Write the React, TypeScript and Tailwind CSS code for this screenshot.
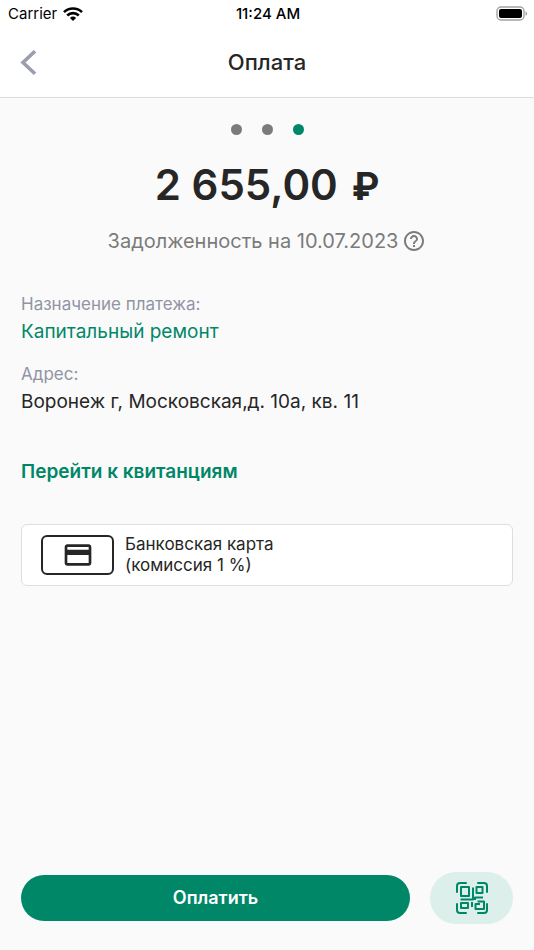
import type { ReactNode } from "react";

const STEPS = 3;
const CURRENT_STEP = 2;

function WifiIcon() {
  return (
    <svg aria-hidden width="20" height="14" viewBox="0 0 20 14" fill="none" stroke="#000" strokeWidth="2.6">
      <path d="M1 5.2a12.8 12.8 0 0 1 18 0" />
      <path d="M4.2 8.5a8.2 8.2 0 0 1 11.6 0" />
      <path d="M10 14 6.9 10.9a4.4 4.4 0 0 1 6.2 0Z" fill="#000" stroke="none" />
    </svg>
  );
}

function BatteryIcon() {
  return (
    <svg aria-hidden width="32" height="16" viewBox="0 0 32 16">
      <rect x="1" y="1" width="27" height="13" rx="4" fill="none" stroke="#a3a3a3" strokeWidth="1.4" />
      <rect x="3" y="3" width="23" height="9" rx="2" fill="#000" />
      <path d="M29.6 5.2c1.8.8 1.8 3.8 0 4.6Z" fill="#8c8c8c" />
    </svg>
  );
}

function HelpIcon() {
  return (
    <svg aria-hidden width="24" height="24" viewBox="0 0 24 24" fill="currentColor">
      <path d="M11 18h2v-2h-2v2zm1-16C6.48 2 2 6.48 2 12s4.48 10 10 10 10-4.48 10-10S17.52 2 12 2zm0 18c-4.41 0-8-3.59-8-8s3.59-8 8-8 8 3.59 8 8-3.59 8-8 8zm0-14c-2.21 0-4 1.79-4 4h2c0-1.1.9-2 2-2s2 .9 2 2c0 2-3 1.75-3 5h2c0-2.25 3-2.5 3-5 0-2.21-1.79-4-4-4z" />
    </svg>
  );
}

function CardIcon() {
  return (
    <svg aria-hidden width="32" height="32" viewBox="0 0 24 24" fill="currentColor">
      <path d="M20 4H4c-1.11 0-1.99.89-1.99 2L2 18c0 1.11.89 2 2 2h16c1.11 0 2-.89 2-2V6c0-1.11-.89-2-2-2zm0 14H4v-6h16v6zm0-10H4V6h16v2z" />
    </svg>
  );
}

function QrIcon() {
  return (
    <svg aria-hidden width="32" height="32" viewBox="0 0 32 32" fill="none" stroke="currentColor" strokeWidth="2" strokeLinejoin="round">
      <path strokeLinecap="round" d="M1 10V4a3 3 0 0 1 3-3h6M22 1h6a3 3 0 0 1 3 3v6M31 22v6a3 3 0 0 1-3 3h-6M10 31H4a3 3 0 0 1-3-3v-6" />
      <rect x="5" y="5" width="8" height="9" />
      <rect x="20.5" y="5" width="6" height="6" />
      <rect x="5" y="21" width="7" height="5" />
      <path d="M17 5.500v12H4.500M16 20v5M27 15.500h-8v2.500M21.500 19.500H28V27h-8.500v-5H24" />
    </svg>
  );
}

function Field({ label, children }: { label: string; children: ReactNode }) {
  return (
    <div>
      <dt className="text-[17px] leading-6 text-[#9194a3]">{label}</dt>
      <dd className="mt-0.5 text-[19px] leading-7">{children}</dd>
    </div>
  );
}

export default function App() {
  return (
    <div className="flex min-h-screen flex-col bg-[#fafafa] font-['Inter','Liberation_Sans',sans-serif] text-[#262626]">
      <header className="border-b border-[#dcdcdc] bg-white">
        <div className="grid h-7 grid-cols-3 items-center pl-2 pr-1.5 text-[15px] text-black">
          <span className="flex items-center gap-1.5">
            Carrier
            <WifiIcon />
          </span>
          <span className="text-center font-medium">11:24 AM</span>
          <span className="flex justify-end">
            <BatteryIcon />
          </span>
        </div>
        <div className="grid h-[69px] grid-cols-[60px_1fr_60px] items-center">
          <button type="button" aria-label="Назад" className="pl-5 text-[#9a9eb0]">
            <svg aria-hidden width="17" height="26" viewBox="0 0 17 26" fill="none" stroke="currentColor" strokeWidth="3.6">
              <path d="M15 1.2 3 12.5l12 11.3" />
            </svg>
          </button>
          <h1 className="text-center text-[22px] font-medium">Оплата</h1>
        </div>
      </header>

      <main className="flex flex-1 flex-col px-[21px] pt-[26px]">
        <div className="flex justify-center gap-5" role="img" aria-label="Шаг 3 из 3">
          {Array.from({ length: STEPS }).map((_, i) => (
            <span
              key={i}
              className={`size-[11px] rounded-full ${i === CURRENT_STEP ? "bg-[#008768]" : "bg-[#7b7b7b]"}`}
            />
          ))}
        </div>

        <p className="mt-6 text-center text-[42px] leading-[52px] font-semibold">
          2 655,00 <span className="ml-1 font-['Roboto',sans-serif] text-[38px] leading-none font-bold">₽</span>
        </p>
        <div className="mt-4 flex items-center justify-center text-[20px] leading-7 text-[#7b7b7b]">
          Задолженность на 10.07.2023
          <button type="button" aria-label="Справка" className="ml-1">
            <HelpIcon />
          </button>
        </div>

        <dl className="mt-[37px] flex flex-col gap-4">
          <Field label="Назначение платежа:">
            <span className="text-[#008768]">Капитальный ремонт</span>
          </Field>
          <Field label="Адрес:">Воронеж г, Московская,д. 10а, кв. 11</Field>
        </dl>

        <a href="#receipts" className="mt-[42px] self-start text-[19px] leading-7 font-semibold text-[#008768]">
          Перейти к квитанциям
        </a>

        <button
          type="button"
          className="mt-[38px] flex items-center gap-[11px] rounded-md border border-[#dedede] bg-white py-[9px] pl-[19px] text-left"
        >
          <span className="grid h-10 w-[73px] place-items-center rounded-md border-2 border-[#262626]">
            <CardIcon />
          </span>
          <span className="text-[17px] leading-[21px]">
            Банковская карта
            <br />
            (комиссия 1 %)
          </span>
        </button>
      </main>

      <footer className="flex items-center gap-5 px-[21px] pb-[26px]">
        <button type="button" className="h-[46px] flex-1 rounded-full bg-[#008768] text-lg font-semibold text-white">
          Оплатить
        </button>
        <button
          type="button"
          aria-label="Оплатить по QR-коду"
          className="grid h-[52px] w-[83px] place-items-center rounded-full bg-[#dcefea] text-[#008768]"
        >
          <QrIcon />
        </button>
      </footer>
    </div>
  );
}
